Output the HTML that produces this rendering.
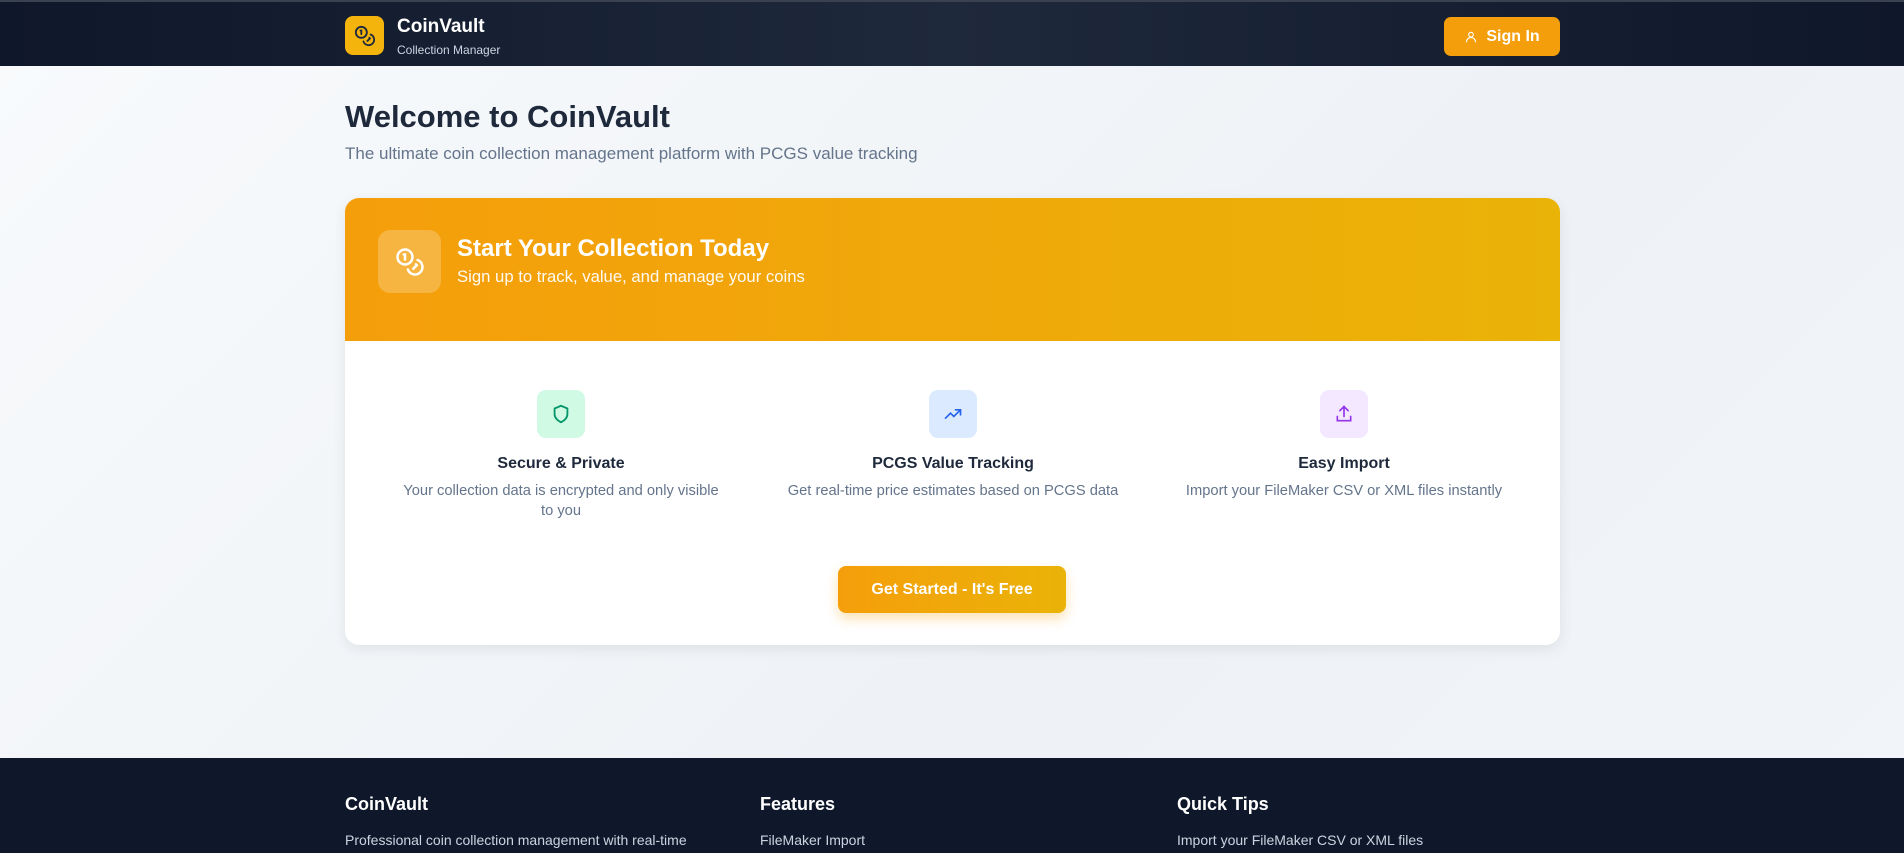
<!DOCTYPE html>
<html><head><meta charset="utf-8"><style>
*{margin:0;padding:0;box-sizing:border-box}
body{width:1904px;height:853px;overflow:hidden;font-family:"Liberation Sans",sans-serif;background:linear-gradient(135deg,#f8fafc,#eef2f6 60%,#f1f5f9);position:relative}
.hdr{position:absolute;left:0;top:0;width:1904px;height:66px;background:linear-gradient(90deg,#0f172a,#1e293b 50%,#0f172a);border-top:2px solid #3a4150}
.logo{position:absolute;left:345px;top:14px;width:39px;height:39px;border-radius:8px;background:#f5b40b;display:flex;align-items:center;justify-content:center}
.t1{position:absolute;left:397px;top:14px;color:#fff;font-weight:bold;font-size:19px}
.t2{position:absolute;left:397px;top:41px;color:#cbd5e1;font-size:12px}
.sign{position:absolute;left:1444px;top:15px;width:116px;height:39px;border-radius:7px;background:#f59e0b;color:#fff;font-weight:bold;font-size:16px;display:flex;align-items:center;justify-content:center;gap:8px}
h1{position:absolute;left:345px;top:99px;font-size:31px;color:#1e293b}
.sub{position:absolute;left:345px;top:144px;font-size:17px;color:#64748b}
.card{position:absolute;left:345px;top:198px;width:1215px;height:447px;border-radius:14px;background:#fff;box-shadow:0 4px 14px rgba(0,0,0,.08);overflow:hidden}
.top{height:143px;background:linear-gradient(90deg,#f59e0b,#eab308)}
.ib{position:absolute;left:33px;top:32px;width:63px;height:63px;border-radius:12px;background:rgba(255,255,255,.22);display:flex;align-items:center;justify-content:center}
.ct{position:absolute;left:112px;top:37px;color:#fff;font-weight:bold;font-size:24px}
.cs{position:absolute;left:112px;top:69px;color:#fff;font-size:16.7px;opacity:.95}
.f{position:absolute;top:192px;width:380px;text-align:center;margin-left:-190px}
.fi{width:48px;height:48px;border-radius:9px;margin:0 auto;display:flex;align-items:center;justify-content:center}
.ft{font-weight:bold;font-size:16px;color:#1e293b;margin-top:17px}
.fd{font-size:14.7px;color:#64748b;margin-top:8px;line-height:20px}
.btn{position:absolute;left:493px;top:368px;width:228px;height:47px;border-radius:8px;background:linear-gradient(90deg,#f59e0b,#eab308);color:#fff;font-weight:bold;font-size:16px;display:flex;align-items:center;justify-content:center;box-shadow:0 6px 12px rgba(245,158,11,.3)}
.foot{position:absolute;left:0;top:758px;width:1904px;height:95px;background:#0f172a}
.fh{position:absolute;top:36px;color:#fff;font-weight:bold;font-size:18px}
.fp{position:absolute;top:74px;color:#cbd5e1;font-size:14px}
</style></head><body>
<div class="hdr">
<div class="logo"><svg width="22" height="22" viewBox="0 0 24 24" fill="none" stroke="#1e293b" stroke-width="2" stroke-linecap="round"><circle cx="8" cy="8" r="6"/><path d="M18.1 10.4A6 6 0 1 1 10.3 18"/><path d="M7 6h1v4"/><path d="M16.7 13.9l.7.7-2.8 2.8"/></svg></div>
<div class="t1">CoinVault</div><div class="t2">Collection Manager</div>
<div class="sign"><svg width="14" height="14" viewBox="0 0 24 24" fill="none" stroke="#fff" stroke-width="2"><circle cx="12" cy="8" r="4"/><path d="M4 21a8 8 0 0 1 16 0"/></svg>Sign In</div>
</div>
<h1>Welcome to CoinVault</h1>
<div class="sub">The ultimate coin collection management platform with PCGS value tracking</div>
<div class="card">
<div class="top"></div>
<div class="ib"><svg width="30" height="30" viewBox="0 0 24 24" fill="none" stroke="#fff" stroke-width="2" stroke-linecap="round"><circle cx="8" cy="8" r="6"/><path d="M18.1 10.4A6 6 0 1 1 10.3 18"/><path d="M7 6h1v4"/><path d="M16.7 13.9l.7.7-2.8 2.8"/></svg></div>
<div class="ct">Start Your Collection Today</div>
<div class="cs">Sign up to track, value, and manage your coins</div>
<div class="f" style="left:216px"><div class="fi" style="background:#d1fae5"><svg width="22" height="22" viewBox="0 0 24 24" fill="none" stroke="#059669" stroke-width="2"><path d="M12 3l7 3v6c0 4-3 7-7 9-4-2-7-5-7-9V6z"/></svg></div><div class="ft">Secure &amp; Private</div><div class="fd">Your collection data is encrypted and only visible<br>to you</div></div>
<div class="f" style="left:608px"><div class="fi" style="background:#dbeafe"><svg width="20" height="20" viewBox="0 0 24 24" fill="none" stroke="#2563eb" stroke-width="2" stroke-linecap="round"><path d="M3 17l6-6 4 4 8-8"/><path d="M15 7h6v6"/></svg></div><div class="ft">PCGS Value Tracking</div><div class="fd">Get real-time price estimates based on PCGS data</div></div>
<div class="f" style="left:999px"><div class="fi" style="background:#f3e8ff"><svg width="20" height="20" viewBox="0 0 24 24" fill="none" stroke="#9333ea" stroke-width="2" stroke-linecap="round"><path d="M12 15V3"/><path d="M7 8l5-5 5 5"/><path d="M4 15v5h16v-5"/></svg></div><div class="ft">Easy Import</div><div class="fd">Import your FileMaker CSV or XML files instantly</div></div>
<div class="btn">Get Started - It's Free</div>
</div>
<div class="foot">
<div class="fh" style="left:345px">CoinVault</div><div class="fp" style="left:345px">Professional coin collection management with real-time</div>
<div class="fh" style="left:760px">Features</div><div class="fp" style="left:760px">FileMaker Import</div>
<div class="fh" style="left:1177px">Quick Tips</div><div class="fp" style="left:1177px">Import your FileMaker CSV or XML files</div>
</div>
</body></html>
